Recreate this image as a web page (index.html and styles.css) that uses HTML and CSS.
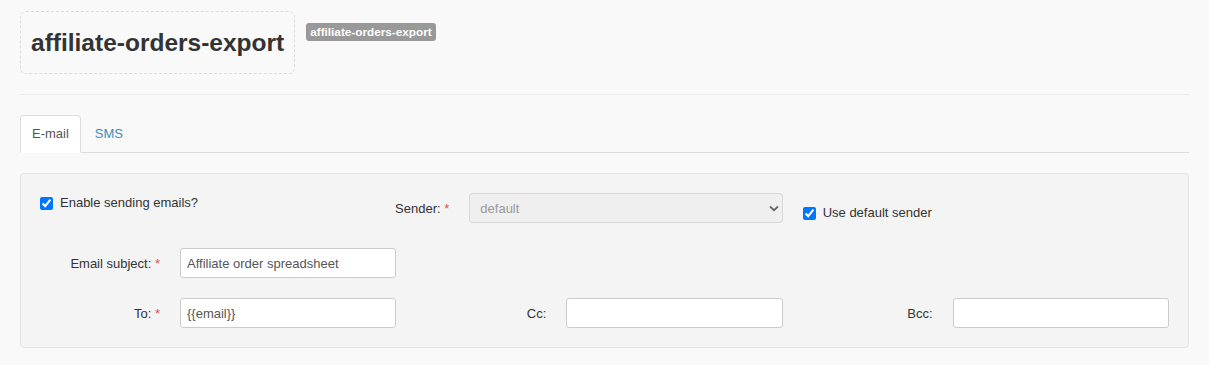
FILE: index.html
```html
<!DOCTYPE html>
<html lang="en">
<head>
  <meta charset="UTF-8">
  <meta name="viewport" content="width=device-width, initial-scale=1.0">
  <title>affiliate-orders-export</title>
  <link rel="stylesheet" href="styles.css">
</head>
<body>
  <div class="page">
    <div class="page-header">
      <h1 class="title-box">affiliate-orders-export</h1>
      <span class="badge">affiliate-orders-export</span>
    </div>

    <ul class="tabs">
      <li class="active"><a href="#">E-mail</a></li>
      <li><a href="#">SMS</a></li>
    </ul>

    <div class="tab-content">
      <div class="well">
        <!-- sending + sender -->
        <div class="row-first">
          <label class="check"><input type="checkbox" checked> Enable sending emails?</label>
          <div class="field field-sender">
            <div class="field-label"><span>Sender: <i>*</i></span></div>
            <div class="select-wrap">
              <select disabled><option>default</option></select>
              <svg class="chevron" width="10" height="7" viewBox="0 0 10 7"><path d="M1 1.5 L5 5.2 L9 1.5" fill="none" stroke="#666" stroke-width="1.8"/></svg>
            </div>
          </div>
          <label class="check check-low"><input type="checkbox" checked> Use default sender</label>
        </div>

        <div class="form-row">
          <div class="field">
            <label>Email subject: <i>*</i></label>
            <input type="text" value="Affiliate order spreadsheet">
          </div>
        </div>

        <div class="form-row">
          <div class="field">
            <label>To: <i>*</i></label>
            <input type="text" value="{{email}}">
          </div>
          <div class="field">
            <label>Cc:</label>
            <input type="text">
          </div>
          <div class="field">
            <label>Bcc:</label>
            <input type="text">
          </div>
        </div>
      </div>
    </div>
  </div>
</body>
</html>
```

FILE: styles.css
```css
body {
  margin: 0;
  background-color: #f9f9f9;
  font-family: "Liberation Sans", Arial, sans-serif;
  font-size: 13px;
  color: #333;
}
.page {
  padding: 11px 20px 0 20px;
}
/* title */
.page-header {
  display: flex;
  align-items: flex-start;
  padding-bottom: 20px;
  border-bottom: 1px solid #ebebeb;
  margin-bottom: 20px;
}
.title-box {
  margin: 0;
  padding: 0 10px;
  font-size: 24.5px;
  font-weight: bold;
  line-height: 61px;
  color: #333;
  border: 1px dashed #dcdcdc;
  border-radius: 6px;
}
.badge {
  margin: 12px 0 0 11px;
  padding: 3px 4px 4px 4px;
  font-size: 11.75px;
  font-weight: bold;
  line-height: 11px;
  color: #fff;
  background-color: #999;
  border-radius: 3px;
}
/* tabs */
.tabs {
  display: flex;
  list-style: none;
  margin: 0;
  padding: 0;
  border-bottom: 1px solid #ddd;
}
.tabs li {
  margin-bottom: -1px;
}
.tabs a {
  display: block;
  margin-right: 2px;
  padding: 10px 11px;
  line-height: 16px;
  color: #3c8dbc;
  text-decoration: none;
  border: 1px solid transparent;
  border-radius: 4px 4px 0 0;
}
.tabs .active a {
  color: #555;
  background-color: #fff;
  border-color: #ddd #ddd transparent #ddd;
}
.tab-content {
  padding-top: 20px;
}
/* form panel */
.well {
  padding: 19px;
  background-color: #f4f4f4;
  border: 1px solid #e3e3e3;
  border-radius: 4px;
}
.row-first {
  display: flex;
  gap: 20px;
  margin-bottom: 25px;
}
.row-first .check {
  flex: 0 0 366.33px;
}
.row-first .field-sender {
  flex: 0 0 356.33px;
}
.form-row {
  display: grid;
  grid-template-columns: repeat(3, 1fr);
  column-gap: 30px;
  margin-bottom: 20px;
}
.form-row:last-child {
  margin-bottom: 0;
}
.check {
  display: flex;
  align-items: flex-start;
  line-height: 19px;
  color: #333;
}
.check input {
  width: 13px;
  height: 13px;
  margin: 4px 7px 0 0;
}
.check-low {
  margin-top: 10px;
}
.field {
  display: grid;
  grid-template-columns: 120px 1fr;
  column-gap: 20px;
  align-items: center;
}
.field label {
  text-align: right;
  white-space: nowrap;
}
.field i,
.field-label i {
  font-style: normal;
  color: #d9534f;
}
.field-sender {
  grid-template-columns: 23px 1fr;
}
.field-label {
  display: flex;
  justify-content: flex-end;
  white-space: nowrap;
}
.field input {
  box-sizing: border-box;
  width: 100%;
  height: 30px;
  padding: 0 6px;
  font-family: inherit;
  font-size: 13px;
  color: #555;
  background-color: #fff;
  border: 1px solid #ccc;
  border-radius: 3px;
}
.select-wrap {
  position: relative;
}
.select-wrap select {
  box-sizing: border-box;
  width: 100%;
  height: 30px;
  padding: 0 10px;
  font-family: inherit;
  font-size: 13px;
  color: #999;
  opacity: 1;
  background-color: #efefef;
  border: 1px solid #d8d8d8;
  border-radius: 3px;
  appearance: none;
}
.chevron {
  position: absolute;
  right: 4px;
  top: 12px;
}
```
